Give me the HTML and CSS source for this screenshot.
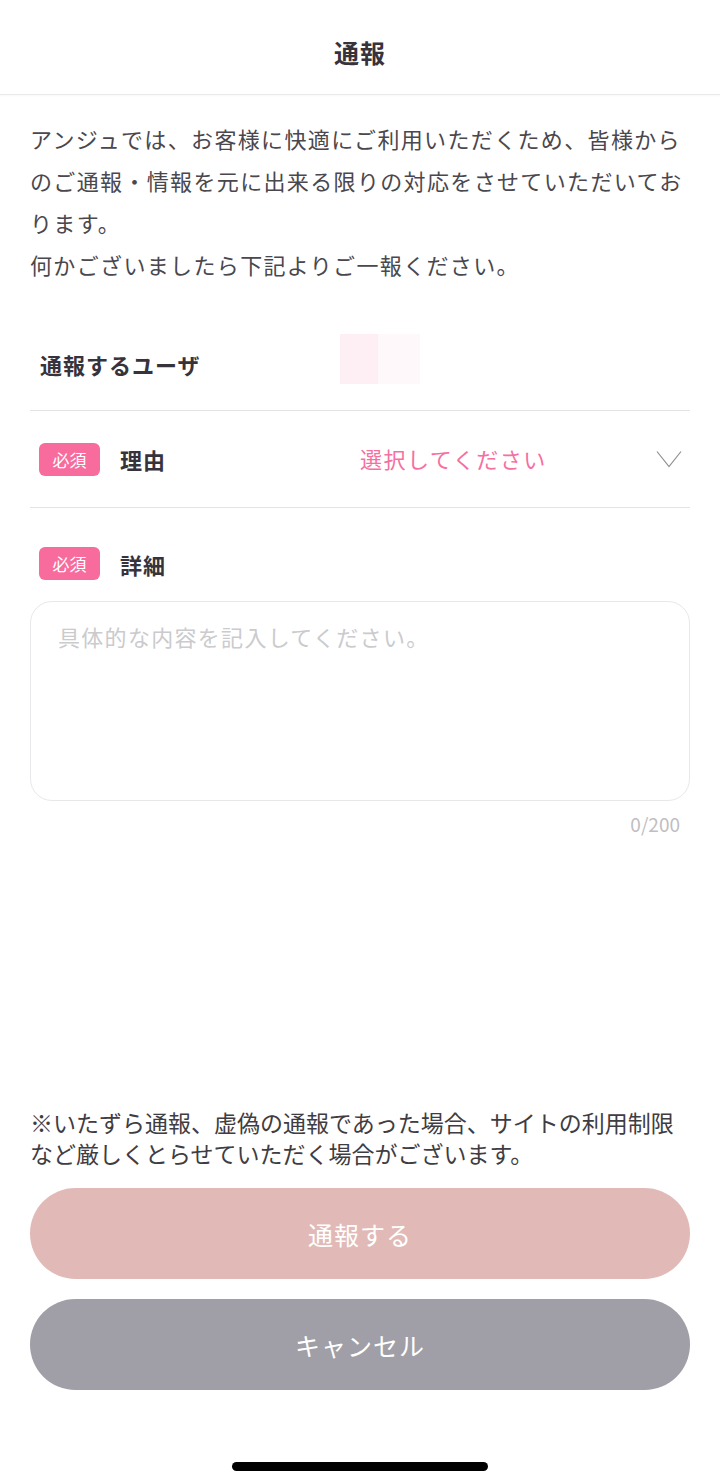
FILE: index.html
```html
<!DOCTYPE html>
<html lang="ja">
<head>
    <meta charset="UTF-8">
    <meta name="viewport" content="width=device-width, initial-scale=1.0">
    <title>通報</title>
    <link rel="stylesheet" href="styles.css">
</head>
<body>
    <div class="header">通報</div>

    <p class="intro">アンジュでは、お客様に快適にご利用いただくため、皆様から<br>のご通報・情報を元に出来る限りの対応をさせていただいてお<br>ります。<br>何かございましたら下記よりご一報ください。</p>

    <div class="row user-row">
        <span class="label user-label">通報するユーザ</span>
        <span class="user-thumb"></span>
    </div>

    <div class="row reason-row">
        <div class="field-name">
            <span class="badge">必須</span>
            <span class="label">理由</span>
        </div>
        <span class="select-value">選択してください</span>
        <svg class="chevron" width="26" height="18" viewBox="0 0 26 18">
            <polyline points="1,1.5 13,16.5 25,1.5" fill="none" stroke="#8f8e94" stroke-width="1.2" />
        </svg>
    </div>

    <div class="detail-head">
        <span class="badge">必須</span>
        <span class="label">詳細</span>
    </div>
    <textarea class="detail-input" placeholder="具体的な内容を記入してください。"></textarea>
    <div class="counter">0/200</div>

    <span style="flex: 1;"></span>

    <p class="notice">※いたずら通報、虚偽の通報であった場合、サイトの利用制限<br>など厳しくとらせていただく場合がございます。</p>

    <div class="actions">
        <a class="button submit">通報する</a>
        <a class="button cancel">キャンセル</a>
    </div>

    <div class="home-bar"></div>
</body>
</html>
```

FILE: styles.css
```css
:root {
    --pink: #f76c9d;
    --text: #37333d;
    --body-text: #4a474d;
    --line: #e3e3e5;
}

html {
    background-color: #ffffff;
    color: var(--text);
    font-family: "Noto Sans CJK JP", "Noto Sans", sans-serif;
    font-size: 22px;
    text-spacing-trim: space-all;
}

body {
    margin: 0;
    padding: 0;
    height: 100vh;
    display: flex;
    flex-direction: column;
}

.header {
    height: 95px;
    flex-shrink: 0;
    display: flex;
    align-items: center;
    justify-content: center;
    font-size: 25px;
    font-weight: bold;
    letter-spacing: 1px;
    border-bottom: 1px solid #e9e9eb;
    box-shadow: 0 1px 2px rgba(0, 0, 0, 0.03);
    padding-top: 10px;
    box-sizing: border-box;
}

.intro {
    margin: 0;
    padding: 22px 30px 0;
    font-size: 22px;
    line-height: 42px;
    letter-spacing: 1.35px;
    white-space: nowrap;
    color: var(--body-text);
}

.row {
    margin: 0 30px;
    display: flex;
    align-items: center;
    border-bottom: 1px solid var(--line);
}

.label {
    font-weight: bold;
    font-size: 22px;
    letter-spacing: 1px;
    color: var(--text);
}

.user-row {
    margin-top: 33px;
    height: 92px;
    padding-left: 10px;
}

.user-label { width: 300px; }

.user-thumb {
    width: 80px;
    height: 50px;
    margin-bottom: 10px;
    background: linear-gradient(to right, #fdeff3 0 47%, #fef8fa 47% 100%);
}

.reason-row {
    height: 96px;
    padding-left: 9px;
}

.field-name {
    width: 321px;
    display: flex;
    align-items: center;
    gap: 20px;
}

.badge {
    width: 61px;
    height: 33px;
    border-radius: 6px;
    background-color: var(--pink);
    color: #ffffff;
    font-size: 17px;
    display: flex;
    align-items: center;
    justify-content: center;
}

.select-value {
    flex: 1;
    color: #f5709f;
    font-size: 22px;
    letter-spacing: 1.5px;
    padding-bottom: 2px;
}

.chevron { margin-right: 8px; }

.detail-head {
    margin: 39px 30px 0;
    padding-left: 9px;
    display: flex;
    align-items: center;
    gap: 20px;
}

.detail-input {
    margin: 21px 30px 0;
    height: 200px;
    flex-shrink: 0;
    box-sizing: border-box;
    padding: 18px 27px;
    border: 1px solid #e8e8ea;
    border-radius: 22px;
    resize: none;
    outline: none;
    font-family: inherit;
    font-size: 22px;
    letter-spacing: 1.3px;
    line-height: 32px;
    color: var(--text);
}

.detail-input::placeholder { color: #cbcacd; }

.counter {
    margin: 10px 40px 0;
    text-align: right;
    font-size: 19px;
    line-height: 26px;
    color: #bfbec2;
}

.notice {
    margin: 0;
    padding: 0 30px;
    font-size: 23px;
    line-height: 31px;
    white-space: nowrap;
    color: #3f3c42;
}

.actions {
    margin: 19px 30px 0;
    display: flex;
    flex-direction: column;
    gap: 20px;
}

.button {
    height: 91px;
    border-radius: 46px;
    display: flex;
    align-items: center;
    justify-content: center;
    color: #ffffff;
    font-size: 25px;
    letter-spacing: 1px;
    text-decoration: none;
}

.button.submit { background-color: #e1bab7; }
.button.cancel { background-color: #a09fa7; }

.home-bar {
    width: 256px;
    height: 9px;
    border-radius: 5px;
    background-color: #000000;
    margin: 72px auto 13px;
    flex-shrink: 0;
}
```
